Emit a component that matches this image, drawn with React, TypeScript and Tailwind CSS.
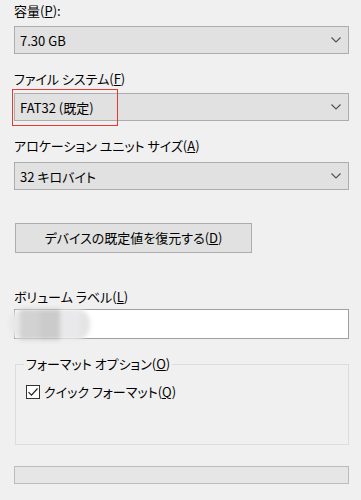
import React from 'react';

const font = {
  fontFamily: '"Noto Sans CJK JP", "Noto Sans", sans-serif',
  fontFeatureSettings: '"palt"',
};

function Chevron() {
  return (
    <svg width="10" height="6" viewBox="0 0 10 6" className="shrink-0">
      <path d="M0.5 0.5 L5 5 L9.5 0.5" fill="none" stroke="#505050" strokeWidth="1.1" />
    </svg>
  );
}

function Combo({ value }: { value: string }) {
  return (
    <div className="h-[28px] border border-[#adadad] bg-[#e1e1e1] flex items-center justify-between pl-[5px] pr-[7px]">
      <span className="text-[13px] leading-none">{value}</span>
      <Chevron />
    </div>
  );
}

function Label({ children, className = '' }: { children: React.ReactNode; className?: string }) {
  return <div className={`text-[13px] leading-[18px] h-[18px] ${className}`}>{children}</div>;
}

export default function App() {
  return (
    <div className="relative w-[361px] h-[500px] bg-[#f0f0f0] text-black overflow-hidden" style={font}>
      <div className="flex flex-col px-[14px] pt-[2px]">
        <Label>
          容量(<u>P</u>):
        </Label>
        <div className="mt-[6px] w-[335px]">
          <Combo value="7.30 GB" />
        </div>

        <Label className="mt-[16px]">
          ファイル システム(<u>F</u>)
        </Label>
        <div className="mt-[5px] w-[335px]">
          <Combo value="FAT32 (既定)" />
        </div>

        <Label className="mt-[16px]">
          アロケーション ユニット サイズ(<u>A</u>)
        </Label>
        <div className="mt-[7px] w-[335px]">
          <Combo value="32 キロバイト" />
        </div>

        <button className="mt-[33px] ml-[1px] w-[237px] h-[30px] border border-[#adadad] bg-[#e1e1e1] text-[13px] flex items-center justify-center">
          デバイスの既定値を復元する(<u>D</u>)
        </button>

        <Label className="mt-[35px]">
          ボリューム ラベル(<u>L</u>)
        </Label>
        <div className="mt-[3px] w-[335px] h-[30px] bg-white border border-[#a0a0a0]" />

        <fieldset className="mt-[16px] ml-[1px] w-[334px] h-[90px] border border-[#dcdcdc] px-[10px] pb-0 pt-0">
          <legend className="text-[13px] leading-[18px] px-[2px] ml-[-2px]">
            フォーマット オプション(<u>O</u>)
          </legend>
          <div className="flex items-center mt-[10px] gap-[4px]">
            <div className="w-[14px] h-[14px] border border-[#333] bg-white flex items-center justify-center">
              <svg width="12" height="12" viewBox="0 0 12 12">
                <path d="M1.5 6.2 L4.5 9.2 L10.5 2.5" fill="none" stroke="#222" strokeWidth="1.2" />
              </svg>
            </div>
            <span className="text-[13px] leading-[18px]">
              クイック フォーマット(<u>Q</u>)
            </span>
          </div>
        </fieldset>

        <div className="mt-[21px] w-[335px] h-[18px] border border-[#bcbcbc] bg-[#e6e6e6]" />
      </div>

      {/* highlight */}
      <div className="absolute left-[12px] top-[89px] w-[106px] h-[37px] border border-[#e53935]" />

      {/* blurred name */}
      <div className="absolute left-[10px] top-[309px] w-[80px] h-[31px] rounded-[14px] bg-[#e4e4e4] blur-[2px] flex overflow-hidden">
        <div className="w-[10px] bg-[#e8e8e8]" />
        <div className="w-[20px] bg-[#d2d2d2]" />
        <div className="w-[20px] bg-[#cbcbcb]" />
        <div className="w-[20px] bg-[#e9e9eb]" />
      </div>
    </div>
  );
}
